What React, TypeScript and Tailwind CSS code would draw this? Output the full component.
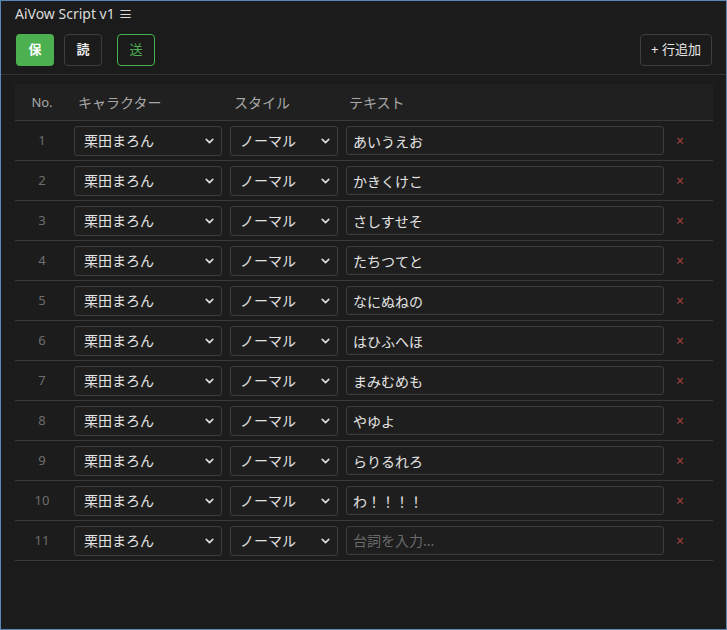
import { ChevronDown } from 'lucide-react';

interface Line {
  no: number;
  character: string;
  style: string;
  text: string;
}

const texts = [
  'あいうえお',
  'かきくけこ',
  'さしすせそ',
  'たちつてと',
  'なにぬねの',
  'はひふへほ',
  'まみむめも',
  'やゆよ',
  'らりるれろ',
  'わ！！！！',
  '',
];

const lines: Line[] = texts.map((text, i) => ({
  no: i + 1,
  character: '栗田まろん',
  style: 'ノーマル',
  text,
}));

const Select = ({ value, width }: { value: string; width: string }) => (
  <div className={`relative ${width} h-[30px] shrink-0`}>
    <select
      defaultValue={value}
      className="appearance-none w-full h-full rounded-[3px] border border-[#3d3d3d] bg-[#1e1e1e] pl-[9px] pr-6 text-[14px] text-[#e4e4e4] outline-none"
    >
      <option>{value}</option>
    </select>
    <ChevronDown
      className="pointer-events-none absolute right-[6px] top-1/2 -translate-y-1/2 w-[13px] h-[13px] text-[#d8d8d8]"
      strokeWidth={3.2}
    />
  </div>
);

const App = () => {
  return (
    <div
      className="w-[727px] h-[630px] border border-[#5b86b8] bg-[#1b1b1b] flex flex-col overflow-hidden"
      style={{ fontFamily: '"Noto Sans", "Noto Sans CJK JP", sans-serif' }}
    >
      <div className="border-b border-[#333] pb-[8px]">
        <div className="pl-[14px] pt-[3px] h-[22px] text-[14px] leading-[19px] text-[#dcdcdc]">
          AiVow Script v1 ≡
        </div>
        <div className="flex items-center pl-[15px] pr-[14px] mt-[11px]">
          <button className="w-[38px] h-[32px] rounded-[4px] bg-[#4caf50] text-white text-[13px] font-bold">
            保
          </button>
          <button className="ml-[10px] w-[38px] h-[32px] rounded-[4px] border border-[#3e3e3e] bg-[#1b1b1b] text-[#eee] text-[13px] font-bold">
            読
          </button>
          <button className="ml-[15px] w-[38px] h-[32px] rounded-[4px] border border-[#4caf50] bg-[#1b1b1b] text-[#4caf50] text-[13px]">
            送
          </button>
          <button className="ml-auto w-[72px] h-[32px] rounded-[4px] border border-[#3e3e3e] bg-[#1b1b1b] text-[#e8e8e8] text-[13px]">
            + 行追加
          </button>
        </div>
      </div>

      <div className="pt-[9px] pl-[14px] pr-[13px]">
        <div className="flex items-center h-[37px] bg-[#202020] border-b border-[#3a3a3a] text-[14px] text-[#a8a8a8]">
          <div className="w-[54px] text-center text-[13px] pt-[2px]">No.</div>
          <div className="ml-[5px] w-[148px] pl-[4px]">キャラクター</div>
          <div className="ml-[8px] w-[108px] pl-[4px]">スタイル</div>
          <div className="ml-[8px] pl-[3px]">テキスト</div>
        </div>
        {lines.map((line) => (
          <div key={line.no} className="flex items-center h-[40px] border-b border-[#3a3a3a] bg-[#1c1c1c]">
            <div className="w-[54px] text-center text-[13px] text-[#6e6e6e]">{line.no}</div>
            <div className="ml-[5px]">
              <Select value={line.character} width="w-[148px]" />
            </div>
            <div className="ml-[8px]">
              <Select value={line.style} width="w-[108px]" />
            </div>
            <input
              defaultValue={line.text}
              placeholder="台詞を入力..."
              className="ml-[8px] w-[318px] h-[29px] rounded-[3px] border border-[#3d3d3d] bg-[#1e1e1e] px-[6px] text-[14px] text-[#e4e4e4] placeholder:text-[#6a6a6a] outline-none"
            />
            <span className="ml-[12px] text-[14px] text-[#a8403f]">×</span>
          </div>
        ))}
      </div>
    </div>
  );
};

export default App;
